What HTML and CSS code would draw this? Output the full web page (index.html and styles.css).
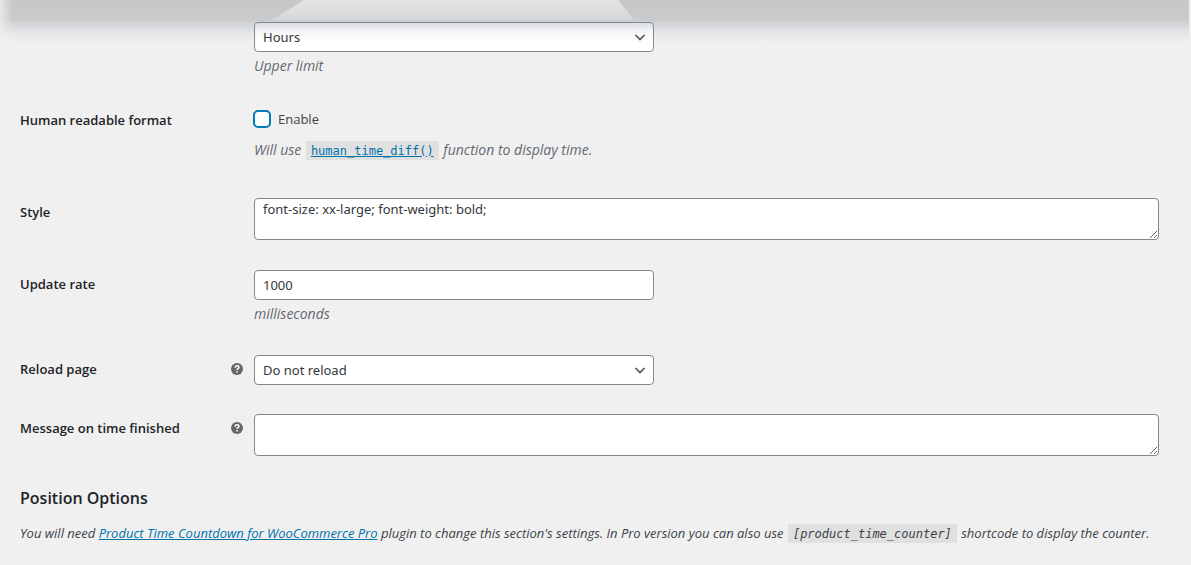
FILE: index.html
```html
<!DOCTYPE html>
<html lang="en">
<head>
<meta charset="utf-8">
<title>Product Time Countdown settings</title>
<link rel="stylesheet" href="styles.css">
</head>
<body>
<div class="haze" aria-hidden="true"><div class="haze-light"></div></div>
<main class="settings">
  <form class="form">
    <div class="row">
      <div class="label"></div>
      <div class="field">
        <select class="control select shaded" aria-label="Upper limit"><option>Hours</option></select>
        <p class="description">Upper limit</p>
      </div>
    </div>
    <div class="row row-check">
      <div class="label">Human readable format</div>
      <div class="field">
        <label class="check"><input class="checkbox" type="checkbox">Enable</label>
        <p class="description">Will use <code class="code"><a class="link" href="#">human_time_diff()</a></code> function to display time.</p>
      </div>
    </div>
    <div class="row">
      <label class="label" for="style">Style</label>
      <div class="field"><textarea class="control area" id="style">font-size: xx-large; font-weight: bold;</textarea></div>
    </div>
    <div class="row">
      <label class="label" for="rate">Update rate</label>
      <div class="field">
        <input class="control" id="rate" type="text" value="1000">
        <p class="description">milliseconds</p>
      </div>
    </div>
    <div class="row row-tight">
      <label class="label" for="reload">Reload page
        <svg class="help" viewBox="0 0 12 12"><circle cx="6" cy="6" r="6" fill="#666"/><path d="M4.1 4.7C4.2 3.3 5 2.8 6 2.8s1.9.6 1.9 1.6C7.9 5.6 6 5.6 6 7" fill="none" stroke="#fff" stroke-width="1.5"/><path d="M5.2 8h1.6v1.5H5.2z" fill="#fff"/></svg>
      </label>
      <div class="field"><select class="control select" id="reload"><option>Do not reload</option></select></div>
    </div>
    <div class="row">
      <label class="label" for="message">Message on time finished
        <svg class="help" viewBox="0 0 12 12"><circle cx="6" cy="6" r="6" fill="#666"/><path d="M4.1 4.7C4.2 3.3 5 2.8 6 2.8s1.9.6 1.9 1.6C7.9 5.6 6 5.6 6 7" fill="none" stroke="#fff" stroke-width="1.5"/><path d="M5.2 8h1.6v1.5H5.2z" fill="#fff"/></svg>
      </label>
      <div class="field"><textarea class="control area" id="message"></textarea></div>
    </div>
  </form>
  <h2 class="heading">Position Options</h2>
  <p class="note">You will need <a class="link" href="#">Product Time Countdown for WooCommerce Pro</a> plugin to change this section's settings. In Pro version you can also use <code class="code">[product_time_counter]</code> shortcode to display the counter.</p>
</main>
</body>
</html>
```
FILE: styles.css
```css
* { box-sizing: border-box; }
body {
  margin: 0;
  background: #f0f0f0;
  color: #3c434a;
  font-family: "Open Sans", "Noto Sans", sans-serif;
  font-size: 13px;
  line-height: 21px;
}
/* soft shadow of the bar above the form */
.haze {
  position: absolute;
  top: 0;
  left: 0;
  right: 2px;
  height: 44px;
  background: linear-gradient(#c6c7c9 0, #c9cbcc 20px, #d5d7d8 25px, #dfe1e4 30px, #e9e9e9 35px, #f0f0f0 44px);
  mask-image: linear-gradient(90deg, rgba(0, 0, 0, .2), #000 12px);
}
.haze-light {
  width: 362px;
  height: 20px;
  margin-left: 272px;
  background: linear-gradient(#e3e4e3, #d7d8da);
  clip-path: polygon(32px 0, 346px 0, 100% 100%, 0 100%);
}
.settings { position: relative; padding: 7px 32px 0 20px; }
.row {
  display: grid;
  grid-template-columns: 224px minmax(0, 1fr);
  column-gap: 10px;
  padding: 15px 0;
}
.row-check { padding: 14px 0 20px; }
.row-tight { padding-bottom: 14px; }
.label {
  display: flex;
  justify-content: space-between;
  align-items: flex-start;
  padding-top: 4px;
  color: #1d2327;
  font-weight: 600;
  line-height: 20px;
}
.help { width: 12px; height: 12px; margin: 4px 1px 0 0; }
.control {
  display: block;
  width: 100%;
  max-width: 400px;
  height: 30px;
  margin: 0;
  padding: 0 8px;
  border: 1px solid #7e8993;
  border-radius: 4px;
  background: #fff;
  color: #32373c;
  font: inherit;
  font-family: "Noto Sans", "Open Sans", sans-serif;
}
.select {
  appearance: none;
  padding-right: 24px;
  background: #fff url("data:image/svg+xml,%3Csvg xmlns='http://www.w3.org/2000/svg' viewBox='0 0 12 12'%3E%3Cpath d='M1.5 4l4.5 4.5L10.500 4' fill='none' stroke='%23555' stroke-width='1.700'/%3E%3C/svg%3E") no-repeat right 7px center / 12px 12px;
}
.shaded {
  background-image: url("data:image/svg+xml,%3Csvg xmlns='http://www.w3.org/2000/svg' viewBox='0 0 12 12'%3E%3Cpath d='M1.5 4l4.5 4.5L10.500 4' fill='none' stroke='%23555' stroke-width='1.700'/%3E%3C/svg%3E"), linear-gradient(#dcdfe2, #f5f6f7 9px, #fff 18px);
  background-position: right 7px center, 0 0;
  background-size: 12px 12px, 100% 100%;
}
.area { max-width: none; height: 42px; padding: 0 8px; resize: vertical; }
.description {
  margin: 3px 0 0;
  padding-bottom: 1px;
  color: #646970;
  font-size: 14px;
  font-style: italic;
}
.check { display: flex; align-items: center; gap: 7px; width: fit-content; height: 26px; }
.row-check .description { margin-top: 7px; }
.checkbox {
  appearance: none;
  width: 18px;
  height: 18px;
  margin: 0 0 0 -1px;
  border: 2px solid #007cba;
  border-radius: 5px;
  background: #fff;
}
.code {
  margin: 0 1px;
  padding: 3px 5px 2px;
  background: #e0e0e0;
  font-family: "DejaVu Sans Mono", monospace;
  font-size: 12px;
}
.description .code { font-style: normal; }
.link { color: #0073aa; text-decoration: underline; }
.heading {
  margin: 15px 0 13px;
  color: #1d2327;
  font-size: 16px;
  font-weight: 600;
  line-height: 24px;
}
.note { margin: 0; font-size: 13px; font-style: italic; }
```
